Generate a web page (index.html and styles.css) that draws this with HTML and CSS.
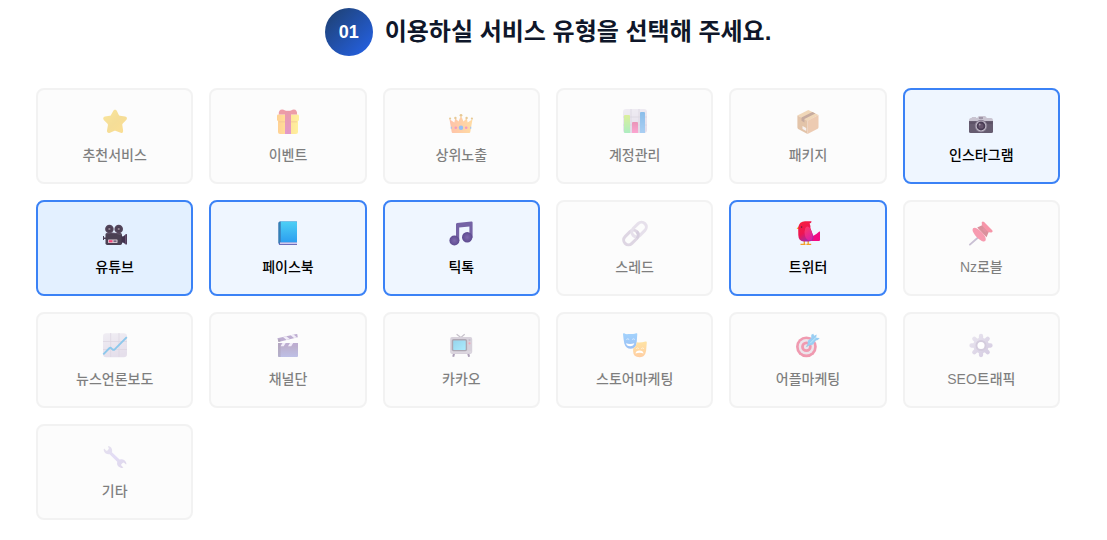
FILE: index.html
```html
<!DOCTYPE html>
<html lang="ko">
<head>
<meta charset="utf-8">
<title>서비스 유형 선택</title>
<link rel="stylesheet" href="styles.css">
</head>
<body>
<svg class="defs" width="0" height="0" aria-hidden="true">
  <defs>
    <linearGradient id="gold" x2="1" y2="1"><stop stop-color="#f7cf3c"/><stop offset=".5" stop-color="#ecbd32"/><stop offset="1" stop-color="#f9bf2a"/></linearGradient>
    <linearGradient id="gift"><stop stop-color="#ffa52c"/><stop offset="1" stop-color="#ffe43f"/></linearGradient>
    <linearGradient id="ribbon" x2="0" y2="1"><stop stop-color="#dc3850"/><stop offset="1" stop-color="#c6349c"/></linearGradient>
    <linearGradient id="crown"><stop stop-color="#ff8656"/><stop offset="1" stop-color="#ffba4a"/></linearGradient>
    <linearGradient id="green" x2="0" y2="1"><stop stop-color="#b8e03c"/><stop offset="1" stop-color="#5fdd86"/></linearGradient>
    <linearGradient id="pinkbar" x2="0" y2="1"><stop stop-color="#d52e72"/><stop offset="1" stop-color="#f94fa4"/></linearGradient>
    <linearGradient id="bluebar" x2="0" y2="1"><stop stop-color="#1a7fd6"/><stop offset="1" stop-color="#569fe8"/></linearGradient>
    <linearGradient id="sheet" x2=".3" y2="1"><stop stop-color="#e2dde9"/><stop offset="1" stop-color="#cdc1d9"/></linearGradient>
    <linearGradient id="book" x2="0" y2="1"><stop stop-color="#4dd0f5"/><stop offset="1" stop-color="#2c9ef0"/></linearGradient>
    <linearGradient id="bird" x2=".5" y2="1"><stop stop-color="#f8203a"/><stop offset=".6" stop-color="#ed1553"/><stop offset="1" stop-color="#a32aa6"/></linearGradient>
    <linearGradient id="wing" x2=".5" y2="1"><stop stop-color="#ff3c62"/><stop offset="1" stop-color="#dc20a4"/></linearGradient>
    <linearGradient id="clap" x2="0" y2="1"><stop stop-color="#7d5a8e"/><stop offset="1" stop-color="#7f83d0"/></linearGradient>
    <linearGradient id="screen" x2="1" y2="1"><stop stop-color="#30acdc"/><stop offset="1" stop-color="#5cd8fc"/></linearGradient>
    <linearGradient id="happy" x2="0" y2="1"><stop stop-color="#49a8fc"/><stop offset="1" stop-color="#3a84ec"/></linearGradient>
    <linearGradient id="sad" x2="0" y2="1"><stop stop-color="#ffc94a"/><stop offset="1" stop-color="#ff9f4a"/></linearGradient>
    <linearGradient id="gear" x2="1" y2="1"><stop stop-color="#d4cce0"/><stop offset="1" stop-color="#ab99c5"/></linearGradient>
    <linearGradient id="wrench" x2="1" y2="1"><stop stop-color="#cbc2d9"/><stop offset=".5" stop-color="#c8bbee"/><stop offset="1" stop-color="#bfb1d4"/></linearGradient>
    <radialGradient id="note"><stop stop-color="#7d68ad"/><stop offset="1" stop-color="#5e4b90"/></radialGradient>
    <radialGradient id="reel"><stop stop-color="#84727f"/><stop offset=".35" stop-color="#493d52"/><stop offset="1" stop-color="#58495f"/></radialGradient>
  </defs>
</svg>

<main class="page">
  <header class="step">
    <span class="step-number">01</span>
    <h2 class="step-title">이용하실 서비스 유형을 선택해 주세요.</h2>
  </header>

  <section class="services">
    <button class="service is-muted">
      <svg class="icon" viewBox="0 0 24 24"><path fill="url(#gold)" d="M10.2 2.1c.8-1.7 2.9-1.7 3.7 0l1.8 3.6c.3.7.7.9 1.3 1l5.1.8c1.9.3 2.5 2.2 1.1 3.5l-3.4 3.5c-.5.5-.6 1-.5 1.6l.8 5.3c.2 2.2-1.3 3.1-3.1 2.2l-4-1.7c-.7-.3-1.3-.3-2 0l-4 1.8c-1.8.8-3.3-.4-3-2.2l.9-5.2c.1-.7 0-1.1-.6-1.7L1 11.2c-1.4-1.3-.9-3.3 1-3.6l4.7-.8c.8-.1 1.1-.4 1.4-1z"/></svg>
      <span class="label">추천서비스</span>
    </button>
    <button class="service is-muted">
      <svg class="icon" viewBox="0 0 24 24"><rect x="2" y="9" width="20" height="16" rx="2" fill="url(#gift)"/><path d="M3 12h18v1.5H3z" fill="#e78a2d" opacity=".5"/><rect x="1" y="5.5" width="22" height="6.6" rx="1.4" fill="url(#gift)"/><path d="M2.8 5.5C2.4 2.2 4 .4 6.3.5 8.3.5 9.2 2 10.2 2h3.6c1.2 0 2-1.5 4-1.5 2.4 0 3.7 2 3.2 5z" fill="#dc3d52"/><path d="M9 1.8h6V25H9z" fill="url(#ribbon)"/><path d="M11.9 2.5V25" stroke="#b94269" stroke-width=".5"/></svg>
      <span class="label">이벤트</span>
    </button>
    <button class="service is-muted">
      <svg class="icon" viewBox="0 0 24 24"><path fill="url(#crown)" d="M2.7 23 .5 10.2l4.8 3.2 1-4.2 3.2 3.4L12 6.5l2.5 6.1 3.2-3.4 1 4.2 4.8-3.2L21.3 23q-.1 1-1 1H3.7q-.9 0-1-1z"/><g fill="#d0952c"><circle cx="1.1" cy="9.6" r="1.1"/><circle cx="6.4" cy="9" r="1.2"/><circle cx="12" cy="6.3" r="1.4"/><circle cx="17.6" cy="9" r="1.2"/><circle cx="22.9" cy="9.6" r="1.1"/></g><circle cx="12" cy="18.8" r="2.2" fill="#2b80ee"/><circle cx="6.8" cy="18.7" r="1.3" fill="#e83a83"/><circle cx="17.2" cy="18.7" r="1.3" fill="#e83a83"/><path d="M2.3 17.7v2M21.7 17.7v2" stroke="#468ee4" stroke-width="1.1"/></svg>
      <span class="label">상위노출</span>
    </button>
    <button class="service is-muted">
      <svg class="icon" viewBox="0 0 24 24"><rect width="24" height="24" rx="3" fill="url(#sheet)"/><path d="M8 0v24M16 0v24M0 8h24M0 16h24" stroke="#b8afc3" stroke-width=".8"/><path d="M1 7q0-1 1-1h4q1 0 1 1v17H2q-1 0-1-1z" fill="url(#green)"/><path d="M9 24V14q0-1 1-1h4q1 0 1 1v10z" fill="url(#pinkbar)"/><path d="M17 24V4q0-1 1-1h3q1 0 1 1v20z" fill="url(#bluebar)"/></svg>
      <span class="label">계정관리</span>
    </button>
    <button class="service is-muted">
      <svg class="icon" viewBox="0 0 24 24"><path fill="#e3b074" d="M1.4 6.5 12.3.9l10.2 5.2L11.5 12z"/><path fill="#c98a56" d="m1.4 6.5 10.1 5.3V25L2.2 20q-.8-.5-.8-1.4z"/><path fill="#dc9868" d="m22.5 6.1-11 5.7V25l10.2-5.3q.8-.5.8-1.4z"/><path fill="#8f5a42" d="m5.5 8.6 10.9-5.7 3 1.6-11 5.6v3.3l-2.9-1.6z"/><path fill="#f1e6e5" d="m6.5 17 3.7 2v3.1l-3.7-2z"/></svg>
      <span class="label">패키지</span>
    </button>
    <button class="service is-selected">
      <svg class="icon" viewBox="0 0 24 24"><path d="M0 12q0-3 2-3h.8V8h4.4v1h1L9.8 7h6.4l1.7 2H22q2 0 2 3z" fill="#c9c4d1"/><path d="M0 12h24v10.5q0 1.5-1.5 1.5h-21Q0 24 0 22.5z" fill="#665c70"/><path d="M.5 14h7M17 14h6.5" stroke="#55495e" stroke-width="1"/><circle cx="12" cy="17" r="6.2" fill="#8d8297"/><circle cx="12" cy="17" r="5.2" fill="#c9c3cf"/><circle cx="12" cy="17" r="4.4" fill="#493c55"/><circle cx="12" cy="17" r="2.6" fill="#65546c"/><circle cx="10.7" cy="15.5" r=".9" fill="#a59aaa"/><path d="M10 9h4" stroke="#77687f"/></svg>
      <span class="label">인스타그램</span>
    </button>
    <button class="service is-selected is-active">
      <svg class="icon" viewBox="0 0 24 24"><circle cx="6.4" cy="8" r="4.3" fill="url(#reel)"/><circle cx="15.7" cy="8" r="4.3" fill="url(#reel)"/><circle cx="6.4" cy="8" r="1" fill="#948491"/><circle cx="15.7" cy="8" r="1" fill="#948491"/><path d="M0 15h1v1.5h2V18H1v1H0z" fill="#4b4058"/><rect x="2.5" y="12" width="16.5" height="12" rx="1.7" fill="#4a4053"/><path d="M2.8 13q5-2 11-.5l4 1" stroke="#61546b" fill="none"/><path d="m18.5 15 1.5.4 3-2.2q1-.5 1 .6v9q0 1.1-1 .6l-3-1.8-1.5.3z" fill="#40314d"/><path d="M22.8 13.4v9.9" stroke="#745a7b"/><rect x="5" y="18.6" width="9.5" height="3.4" rx=".4" fill="#d9cbd3"/><path d="M5.8 19.2h3.7v2.1H5.8z" fill="#f34279"/><path d="M10.5 19.3h3v1.8h-3z" fill="#75677f"/></svg>
      <span class="label">유튜브</span>
    </button>
    <button class="service is-selected">
      <svg class="icon" viewBox="0 0 24 24"><path d="M2.5 22V2Q2.5.5 4 .5h17V24H4.3q-1.8 0-1.8-2z" fill="#526eba"/><path d="M4 21.2h17v2.3H4z" fill="#d2c9ee"/><path d="M4.5.5H20q1 0 1 1v19.8H4.5z" fill="url(#book)"/><path d="M2.5 2Q2.5.5 4.5.5v20.8q-1.2 0-2 1.3z" fill="#3281b5"/><path d="M3.2 23.5H21" stroke="#5f61b5" stroke-width=".8"/></svg>
      <span class="label">페이스북</span>
    </button>
    <button class="service is-selected">
      <svg class="icon" viewBox="0 0 24 24"><path fill="#7563a5" d="M7 3.3q0-1 1-1.2L22.4.4q1.2-.1 1.2 1v15h-3.2V5.6l-10.2 1V20H7z"/><circle cx="5.4" cy="19.5" r="5" fill="url(#note)"/><circle cx="18.2" cy="16.3" r="5.2" fill="url(#note)"/></svg>
      <span class="label">틱톡</span>
    </button>
    <button class="service is-muted">
      <svg class="icon" viewBox="0 0 24 24"><g fill="none" transform="rotate(-45 12 12.5)"><rect x="-2" y="7.7" width="16.6" height="9.6" rx="4.8" stroke="#beaec8" stroke-width="3"/><rect x="9.4" y="7.7" width="16.6" height="9.6" rx="4.8" stroke="#cfc3d8" stroke-width="3"/><path d="M9.8 17.3a4.8 4.8 0 0 0 4.8-4.8" stroke="#af9fbe" stroke-width="3"/></g></svg>
      <span class="label">스레드</span>
    </button>
    <button class="service is-selected">
      <svg class="icon" viewBox="0 0 24 24"><path d="M3.4 5 .8 7.2q-.3.6.5.8l2.5.1z" fill="#efb62a"/><path d="M8.3 18v5M12.2 18v5M4.5 23.4h5M10.4 23.4h4.8" stroke="#f3a129" stroke-width="1.3"/><path d="M17 15q4-2 6.3-4.4.7-.5.7.5v8q0 1-1 1H15z" fill="#f30983"/><path d="M2.2 6.5Q3.4.3 9 .3h6.1q.6 0 .4.6-.5 1.3-1.9 1.6 1 2 .8 4.4l3 8q.9 5.3-4.6 5.5H8q-5.6-.4-5.7-6.5z" fill="url(#bird)"/><path d="M9.3 7.3q1.2-3 3.5-1.3 2 1.4 3.6 7.3.9 6.2-2.5 6.2-3.6 0-5-5-.9-3.7.4-7.2z" fill="url(#wing)"/><circle cx="5.6" cy="6.1" r=".8" fill="#661e43"/></svg>
      <span class="label">트위터</span>
    </button>
    <button class="service is-muted">
      <svg class="icon" viewBox="0 0 24 24"><path d="m10.2 15.5-9.3 8.1" stroke="#9582aa" stroke-width="1.9" stroke-linecap="round"/><path d="M8.2 6.5 13.6 4l6.5 6.3-2.6 6z" fill="#b6253c"/><path d="M12.8 1.6q.7-1.7 2.3-.5l7.9 8q1.5 1.8-.6 2.4-2.3.2-4.5-1.5L14 5.8Q12.3 3.5 12.8 1.6z" fill="#ee2f56"/><path d="M3.5 9.1q-.1-3 3.5-2.2 2.3.7 5.8 4.3 4 4 4 7 0 2.6-2.6 2.2-2.7-.6-6.6-4.5-3.8-4-4.1-6.8z" fill="#f03a64"/><path d="m14 7.7 3 3" stroke="#c9284a" stroke-width="2"/></svg>
      <span class="label">Nz로블</span>
    </button>
    <button class="service is-muted">
      <svg class="icon" viewBox="0 0 24 24"><rect y=".2" width="24" height="24" rx="3.2" fill="url(#sheet)"/><path d="M7.7 0v24M16 0v24M0 8.5h24M0 16.5h24" stroke="#bbaec6" stroke-width=".8"/><path d="m.3 21.3 6-6q1.1-1 2.1 0l1 1q1.2 1.1 2.3 0L23.8 4.2" fill="none" stroke="#1c92da" stroke-width="1.9"/></svg>
      <span class="label">뉴스언론보도</span>
    </button>
    <button class="service is-muted">
      <svg class="icon" viewBox="0 0 24 24"><path d="M2 10h20v13q0 1-1 1H3q-1 0-1-1z" fill="url(#clap)"/><path d="M2 10h20v3.3H2z" fill="#7e5fa5"/><path d="m6.5 10-2 3.3h3.2l2-3.3zm7.5 0-2 3.3h3.2l2-3.3z" fill="#e7def4"/><path d="M2 10h2.6v14H3q-1 0-1-1z" fill="#5a4568" opacity=".5"/><path d="m1.4 5.3 19-4.4q.7-.1.9.6l.5 2.7L2.5 8.9z" fill="#7e5fa5"/><path d="m7 4 3.6 2.9 3.2-.8-3.6-2.8zm7.6-1.7L18 5.1l3-.7-3.4-2.8z" fill="#e7def4"/><circle cx="3.3" cy="7.5" r="1.3" fill="#665174"/></svg>
      <span class="label">채널단</span>
    </button>
    <button class="service is-muted">
      <svg class="icon" viewBox="0 0 24 24"><path d="m7.6 1.2 4.3 3.3 3.8-3.3" fill="none" stroke="#918699" stroke-width="1.2"/><path d="m5.5 19-1.3 4.7M18.8 19l1.3 4.7" stroke="#5d4373" stroke-width="2"/><rect x="1.2" y="4.1" width="22" height="16.8" rx="1.8" fill="#b0a5b9"/><path d="M2 19h20.5" stroke="#c6bac9"/><rect x="2.8" y="6" width="15.3" height="12.3" rx="1.8" fill="#5d5267"/><rect x="4.2" y="7.4" width="12.5" height="9.5" rx=".6" fill="url(#screen)"/><circle cx="20.5" cy="7.1" r="1.1" fill="#8c7d98"/><circle cx="20.5" cy="10.3" r="1.1" fill="#e4577a"/></svg>
      <span class="label">카카오</span>
    </button>
    <button class="service is-muted">
      <svg class="icon" viewBox="0 0 24 24"><path d="M0 1.1Q0-.1 1.2.3 3 1.4 5 1.1l4-.1Q11 1.4 13.2.3q1.2-.3 1.1.8l-.6 8.2q-.4 6.3-5.9 6.5-4.8 0-6.5-5.4Q.4 6 0 1.1z" fill="url(#happy)"/><path d="m3.4 6.5 1.4-.7 1.4.7m3 0 1.3-.7 1.3.7" fill="none" stroke="#d3ebff" stroke-width=".8"/><path d="M3 10.2q4 1.4 8.3 0-.7 3-4.2 3T3 10.2z" fill="#fff"/><path d="M13.7 9.3q3.7.9 8.8-.8 1.4-.4 1.3 1l-.7 8.2q-1 6.4-6.2 6.5-6.7.2-6.8-6.2l.1-2.8q3.2-1.3 3.5-5.9z" fill="url(#sad)"/><path d="m13.2 15.7 1.5-.8 1.2.8m2.3 0 1.4-.8 1.4.8" fill="none" stroke="#fff0bf" stroke-width=".8"/><path d="M12.5 20.4q.7-3 4.3-2.8 3.2.2 3.8 2.9-3.9-1.5-8.1-.1z" fill="#fff"/></svg>
      <span class="label">스토어마케팅</span>
    </button>
    <button class="service is-muted">
      <svg class="icon" viewBox="0 0 24 24"><circle cx="10.4" cy="13.8" r="10.4" fill="#e23864"/><circle cx="10.4" cy="13.8" r="7.7" fill="#dccbd8"/><circle cx="10.4" cy="13.8" r="5.3" fill="#e23864"/><circle cx="10.4" cy="13.8" r="2.5" fill="#dccbd8"/><path d="m10.4 13.8 7-7" stroke="#4a91bc" stroke-width="1.3"/><path d="m11.4 12.8.5-5L15.2 5l.1-3.3 2-1 .8 2 2.6-1.1-.6 3.2 3.6.2-1.8 2-2 .4-2.8 4.1-4.6 1.2z" fill="#359fe8"/><path d="m14.1 10.3 6-6" stroke="#8adafa" stroke-width=".9"/></svg>
      <span class="label">어플마케팅</span>
    </button>
    <button class="service is-muted">
      <svg class="icon" viewBox="0 0 24 24"><g stroke="url(#gear)" stroke-width="4.3" stroke-linecap="round"><path d="m12 3 .01 19M2.5 12.5l19 .01M5.3 5.8l13.4 13.4M18.7 5.8 5.3 19.2"/></g><circle cx="12" cy="12.5" r="7.8" fill="url(#gear)"/><circle cx="12" cy="12.5" r="4.5" fill="none" stroke="#ab9bbd" stroke-width="2"/><circle cx="12" cy="12.5" r="3.5" fill="#fff"/></svg>
      <span class="label">SEO트래픽</span>
    </button>
    <button class="service is-muted">
      <svg class="icon" viewBox="0 0 24 24"><path fill="url(#wrench)" d="M5 1.1q4.1.5 4.2 4.8l-.3 1.3 7.7 7.2q4.5-1 6.4 2.8.8 1.7.1 2.3l-2-1.8q-.7-.5-1.5.2l-1.3 1.4q-.5.8.2 1.5l1.9 1.6q-.8.8-2.8.3-4.3-1.4-3.4-6L6.6 9.2Q2.5 9.7 1 6.3.3 4.4 1.1 3.6L3 5.4q.8.7 1.5 0l1.2-1.3q.5-.7-.2-1.4z"/></svg>
      <span class="label">기타</span>
    </button>
  </section>
</main>
</body>
</html>
```
FILE: styles.css
```css
* {
  box-sizing: border-box;
}

body {
  margin: 0;
  background: #fff;
  font-family: "Liberation Sans", "Noto Sans CJK KR", sans-serif;
  color: #000;
}

.defs {
  display: block;
}

.page {
  width: 1096px;
  padding: 8px 36px 0;
}

.step {
  display: flex;
  align-items: center;
  justify-content: center;
  gap: 12px;
  margin-bottom: 32px;
}

.step-number {
  display: flex;
  align-items: center;
  justify-content: center;
  width: 48px;
  height: 48px;
  border-radius: 50%;
  background: linear-gradient(135deg, #1e3f6c, #2563eb);
  color: #fff;
  font-size: 18px;
  font-weight: 700;
}

.step-title {
  margin: 0;
  color: #0f172a;
  font-size: 24px;
  font-weight: 700;
  line-height: 32px;
}

.services {
  display: grid;
  grid-template-columns: repeat(6, 1fr);
  gap: 16px;
}

.service {
  display: flex;
  flex-direction: column;
  align-items: center;
  height: 96px;
  padding: 19px 16px 16px;
  border: 2px solid #e7e7e7;
  border-radius: 8px;
  background: #fafafa;
  color: #000;
  font: inherit;
}

.service.is-muted {
  opacity: 0.5;
}

.service.is-selected {
  border-color: #3b82f6;
  background: #eff6ff;
}

.service.is-active {
  background: #e3f0ff;
}

.icon {
  display: block;
  flex: none;
  width: 24px;
  height: 24px;
  margin-bottom: 12px;
  overflow: visible;
}

.label {
  font-size: 14px;
  font-weight: 500;
  line-height: 20px;
  white-space: nowrap;
}
```
